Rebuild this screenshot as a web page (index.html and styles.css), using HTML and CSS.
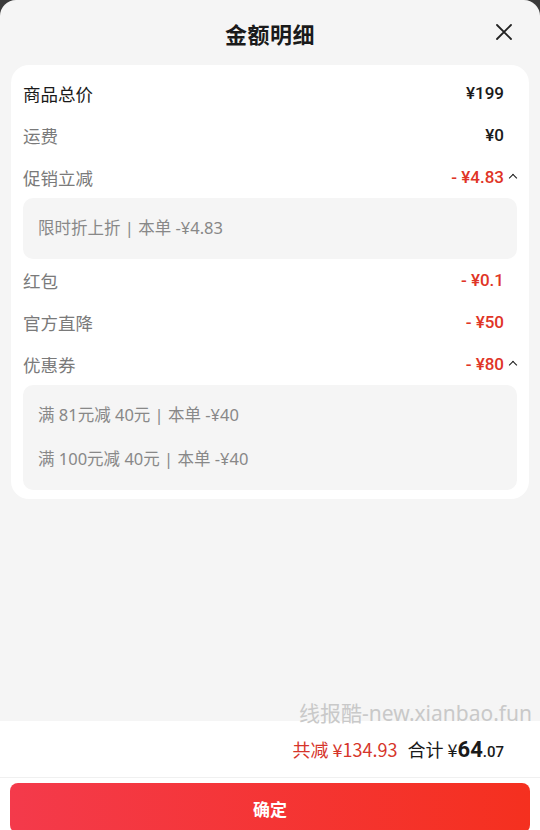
FILE: index.html
```html
<!DOCTYPE html>
<html lang="zh-CN">
<head>
    <meta charset="UTF-8">
    <meta name="viewport" content="width=device-width, initial-scale=1.0">
    <title>金额明细</title>
    <link rel="stylesheet" href="styles.css">
</head>
<body>
    <div class="sheet">
        <!-- Header -->
        <div class="header">
            <h1>金额明细</h1>
            <span class="close">
                <svg width="18" height="18" viewBox="0 0 18 18"><path d="M2 2L16 16M16 2L2 16" stroke="#222" stroke-width="1.8" stroke-linecap="round"/></svg>
            </span>
        </div>

        <!-- Detail Card -->
        <div class="card">
            <div class="row">
                <span class="label strong">商品总价</span>
                <span class="value">¥199</span>
            </div>
            <div class="row">
                <span class="label">运费</span>
                <span class="value">¥0</span>
            </div>
            <div class="row">
                <span class="label">促销立减</span>
                <span class="value red">- ¥4.83<i class="caret"></i></span>
            </div>
            <div class="sub-box">
                <div class="sub-line">限时折上折 | 本单 -¥4.83</div>
            </div>
            <div class="row">
                <span class="label">红包</span>
                <span class="value red">- ¥0.1</span>
            </div>
            <div class="row">
                <span class="label">官方直降</span>
                <span class="value red">- ¥50</span>
            </div>
            <div class="row">
                <span class="label">优惠券</span>
                <span class="value red">- ¥80<i class="caret"></i></span>
            </div>
            <div class="sub-box">
                <div class="sub-line">满 81元减 40元 | 本单 -¥40</div>
                <div class="sub-line">满 100元减 40元 | 本单 -¥40</div>
            </div>
        </div>

        <div class="spacer">
            <span class="watermark">线报酷-new.xianbao.fun</span>
        </div>

        <!-- Footer -->
        <div class="summary">
            <span class="saved">共减 ¥134.93</span>
            <span class="total">合计 ¥<b>64</b><small>.07</small></span>
        </div>
        <div class="actions">
            <button class="confirm">确定</button>
        </div>
    </div>
</body>
</html>
```

FILE: styles.css
```css
/* General */
body {
    margin: 0;
    background: #3a3a3a;
    font-family: "Noto Sans CJK SC", "Noto Sans", sans-serif;
    overflow: hidden;
}

.sheet {
    height: 830px;
    background: #f5f5f5;
    border-radius: 16px 16px 0 0;
    display: flex;
    flex-direction: column;
    overflow: hidden;
}

/* Header */
.header {
    position: relative;
    flex: 0 0 65px;
    display: flex;
    justify-content: center;
    align-items: center;
}

.header h1 {
    margin: 0;
    font-size: 22px;
    font-weight: 700;
    color: #1a1a1a;
    letter-spacing: 0.5px;
}

.close {
    position: absolute;
    right: 27px;
    top: 23px;
    display: flex;
}

/* Card */
.card {
    margin: 0 11px;
    padding: 7px 12px 9px;
    background: #fff;
    border-radius: 18px;
}

.row {
    height: 42px;
    display: flex;
    justify-content: space-between;
    align-items: center;
}

.label {
    font-size: 17.5px;
    color: #7a7a7a;
}

.label.strong {
    color: #1a1a1a;
}

.value {
    position: relative;
    margin-right: 13px;
    font-family: "Roboto", "Noto Sans", sans-serif;
    font-size: 17px;
    font-weight: 500;
    color: #1a1a1a;
}

.value.red {
    color: #e03426;
}

.caret {
    position: absolute;
    right: -12px;
    top: 8px;
    width: 5px;
    height: 5px;
    border-left: 1.8px solid #1a1a1a;
    border-top: 1.8px solid #1a1a1a;
    transform: rotate(45deg);
}

.sub-box {
    background: #f5f5f5;
    border-radius: 10px;
    padding: 8px 15px 9px;
}

.sub-line {
    height: 44px;
    line-height: 44px;
    font-family: "Noto Sans", "Noto Sans CJK SC", sans-serif;
    font-size: 16.5px;
    color: #888;
}

/* Bottom */
.spacer {
    flex: 1;
    display: flex;
    align-items: flex-end;
    justify-content: flex-end;
    padding-right: 8px;
}

.watermark {
    font-family: "Noto Sans", "Noto Sans CJK SC", sans-serif;
    font-size: 21px;
    color: #c9c9c9;
    line-height: 20px;
    margin-bottom: -2px;
    position: relative;
    z-index: 1;
}

.summary {
    box-sizing: border-box;
    flex: 0 0 57px;
    background: #fff;
    display: flex;
    justify-content: flex-end;
    align-items: center;
    gap: 10px;
    padding-right: 36px;
    border-bottom: 1px solid #f0f0f0;
}

.saved {
    font-size: 18px;
    color: #d6352b;
}

.total {
    font-size: 18px;
    color: #1a1a1a;
}

.total b {
    font-family: "Roboto", sans-serif;
    font-size: 22px;
    font-weight: 700;
}

.total small {
    font-family: "Roboto", sans-serif;
    font-size: 15px;
    font-weight: 500;
}

.actions {
    box-sizing: border-box;
    flex: 0 0 52px;
    min-height: 0;
    background: #fff;
    padding: 5px 10px 0;
}

.confirm {
    display: block;
    width: 100%;
    height: 50px;
    border: none;
    border-radius: 8px;
    background: linear-gradient(90deg, #f43a4b, #f5301f);
    color: #fff;
    font-family: "Noto Sans CJK SC", sans-serif;
    font-size: 17px;
    font-weight: 700;
}
```
